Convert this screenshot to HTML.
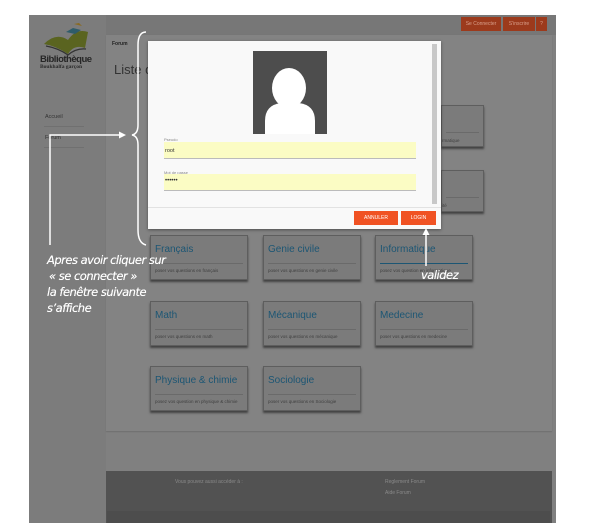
<!DOCTYPE html>
<html><head><meta charset="utf-8"><style>
*{margin:0;padding:0;box-sizing:border-box}
body{width:591px;height:523px;background:#fff;position:relative;overflow:hidden;font-family:"Liberation Sans",sans-serif}
.a{position:absolute}
.card{position:absolute;width:98px;height:45px;background:#7b7b7b;border:1px solid #5e5e5e;box-shadow:0 2px 2px rgba(0,0,0,.5)}
.card .t{position:absolute;left:4px;top:8px;font-size:10px;color:#1c5674}
.card .l{position:absolute;left:4px;right:4px;top:27px;border-top:1px solid #6a6a6a}
.card .s{position:absolute;left:4px;top:32px;font-size:4.5px;color:#3f3f3f;white-space:nowrap}
.ann{position:absolute;color:#fff;font-style:italic;font-size:11.5px;font-family:"DejaVu Sans","Liberation Sans",sans-serif;letter-spacing:-.5px;text-shadow:0 0 .4px #fff}
</style></head><body>
<div class="a" style="left:29px;top:15px;width:527px;height:508px;background:#808080"></div>
<div class="a" style="left:29px;top:15px;width:77px;height:508px;background:#7c7c7c"></div>
<div class="a" style="left:106px;top:15px;width:450px;height:20px;background:#777"></div>
<div class="a" style="left:461px;top:17px;width:40px;height:14px;background:#9c3a1c;color:#d9a08c;font-size:5px;line-height:14px;text-align:center">Se Connecter</div>
<div class="a" style="left:503px;top:17px;width:32px;height:14px;background:#9c3a1c;color:#d9a08c;font-size:5px;line-height:14px;text-align:center">S'inscrire</div>
<div class="a" style="left:536px;top:17px;width:11px;height:14px;background:#9c3a1c;color:#d9a08c;font-size:5px;line-height:14px;text-align:center">?</div>
<!-- logo -->
<svg class="a" style="left:40px;top:22px" width="56" height="36" viewBox="0 0 56 36"><path d="M4 22 Q16 10 28 18 Q36 6 48 10 L45 26 Q34 22 28 32 Q16 24 4 22Z" fill="#5a6420"/><path d="M6 24 Q18 26 28 33 Q36 26 46 27" stroke="#333" stroke-width="1.2" fill="none"/><path d="M26 10 l7 -4 l8 2 l-6 4z" fill="#2f5c6a"/><path d="M34 2 l5 -1 l3 3z" fill="#8a6a20"/></svg>
<div class="a" style="left:40px;top:54px;font-size:9.5px;color:#262626;font-weight:bold;letter-spacing:-.5px">Bibliothèque</div>
<div class="a" style="left:40px;top:64px;font-size:5.5px;color:#2a2a2a;font-weight:bold;font-family:'Liberation Serif',serif">Boukhalfa garçon</div>
<div class="a" style="left:45px;top:114px;font-size:5.5px;color:#333">Accueil</div>
<div class="a" style="left:44px;top:126px;width:40px;border-top:1px solid #707070"></div>
<div class="a" style="left:45px;top:135px;font-size:5.5px;color:#333">Forum</div>
<div class="a" style="left:44px;top:147px;width:40px;border-top:1px solid #707070"></div>
<!-- main panel -->
<div class="a" style="left:106px;top:35px;width:446px;height:396px;background:#838383;box-shadow:0 1px 1px #6e6e6e"></div>
<div class="a" style="left:112px;top:41px;font-size:5px;color:#222;font-weight:bold">Forum</div>
<div class="a" style="left:114px;top:62px;font-size:13px;color:#333">Liste d</div>
<div class="card" style="left:441px;top:105px;width:43px;height:42px"><div class="l" style="top:26px"></div><div class="s" style="left:0">rmatique</div></div>
<div class="card" style="left:441px;top:170px;width:43px;height:42px"><div class="l" style="top:26px"></div><div class="s" style="left:0">ité</div></div>
<div class="card" style="left:150px;top:235px"><div class="t">Français</div><div class="l"></div><div class="s">poser vos questions en français</div></div>
<div class="card" style="left:263px;top:235px"><div class="t">Genie civile</div><div class="l"></div><div class="s">poser vos questions en genie civile</div></div>
<div class="card" style="left:375px;top:235px"><div class="t">Informatique</div><div class="l" style="border-color:#1c5674"></div><div class="s">posez vos question en informatique</div></div>
<div class="card" style="left:150px;top:301px"><div class="t">Math</div><div class="l"></div><div class="s">poser vos questions en math</div></div>
<div class="card" style="left:263px;top:301px"><div class="t">Mécanique</div><div class="l"></div><div class="s">poser vos questions en mécanique</div></div>
<div class="card" style="left:375px;top:301px"><div class="t">Medecine</div><div class="l"></div><div class="s">poser vos questions en medecine</div></div>
<div class="card" style="left:150px;top:366px"><div class="t">Physique &amp; chimie</div><div class="l"></div><div class="s">posez vos question en physique &amp; chimie</div></div>
<div class="card" style="left:263px;top:366px"><div class="t">Sociologie</div><div class="l"></div><div class="s">poser vos questions en Sociologie</div></div>
<!-- footer -->
<div class="a" style="left:106px;top:471px;width:446px;height:52px;background:#525252"></div>
<div class="a" style="left:107px;top:511px;width:443px;height:12px;background:#4d4d4d"></div>
<div class="a" style="left:175px;top:479px;font-size:5px;color:#8a8a8a">Vous pouvez aussi accéder à :</div>
<div class="a" style="left:385px;top:479px;font-size:5px;color:#8a8a8a">Reglement Forum</div>
<div class="a" style="left:385px;top:490px;font-size:5px;color:#8a8a8a">Aide Forum</div>
<!-- modal -->
<div class="a" style="left:148px;top:41px;width:293px;height:188px;background:#f9f9f9;box-shadow:0 1px 3px rgba(0,0,0,.4)"></div>
<div class="a" style="left:432px;top:44px;width:5px;height:160px;background:#c8c8c8"></div>
<div class="a" style="left:253px;top:51px;width:74px;height:83px;background:#4d4d4d;overflow:hidden">
<svg width="74" height="83" viewBox="0 0 74 83"><ellipse cx="36" cy="37" rx="17" ry="20" fill="#fff"/><path d="M12 83 L12 70 Q12 54 28 52 L46 52 Q62 54 62 70 L62 83Z" fill="#fff"/></svg></div>
<div class="a" style="left:164px;top:137px;font-size:4px;color:#888">Pseudo</div>
<div class="a" style="left:164px;top:142px;width:252px;height:17px;background:#fbfcc4;border-bottom:1px solid #bbb;font-size:5.5px;color:#333;padding:6px 1px">root</div>
<div class="a" style="left:164px;top:170px;font-size:4px;color:#888">Mot de passe</div>
<div class="a" style="left:164px;top:174px;width:252px;height:17px;background:#fbfcc4;border-bottom:1px solid #bbb;font-size:6px;color:#333;padding:4px 1px">••••••</div>
<div class="a" style="left:148px;top:207px;width:293px;border-top:1px solid #e2e2e2"></div>
<div class="a" style="left:354px;top:211px;width:44px;height:14px;background:#f05223;color:#fff;font-size:5px;line-height:14px;text-align:center">ANNULER</div>
<div class="a" style="left:401px;top:211px;width:35px;height:14px;background:#f05223;color:#fff;font-size:5px;line-height:14px;text-align:center">LOGIN</div>
<!-- annotations -->
<svg class="a" style="left:0;top:0" width="591" height="523">
<g stroke="#fff" stroke-width="1.5" fill="none">
<path d="M50 245 L50 135 L120 135"/>
<path d="M146 32 Q138 32 138 45 L138 125 Q138 134 132 135 Q138 136 138 145 L138 230 Q138 243 146 245"/>
<path d="M426 266 L426 232"/>
</g>
<path d="M126 135 L119 131.5 L119 138.5Z" fill="#fff"/>
<path d="M426 228 L422.5 235 L429.5 235Z" fill="#fff"/>
</svg>
<div class="ann" style="left:47px;top:253px">Apres avoir cliquer sur</div>
<div class="ann" style="left:49px;top:269px">« se connecter »</div>
<div class="ann" style="left:47px;top:285px">la fenêtre suivante</div>
<div class="ann" style="left:47px;top:301px">s’affiche</div>
<div class="ann" style="left:421px;top:268px">validez</div>
</body></html>
